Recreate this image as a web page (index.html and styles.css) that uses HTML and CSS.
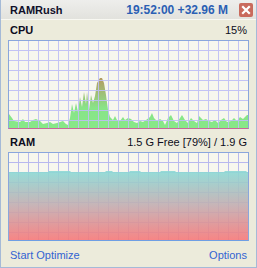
FILE: index.html
```html
<!DOCTYPE html>
<html>
<head>
<meta charset="utf-8">
<link rel="stylesheet" href="styles.css">
</head>
<body>
<div class="window">
  <div class="titlebar">
    <span class="app-name">RAMRush</span>
    <span class="stats">19:52:00 +32.96 M</span>
    <span class="close"><svg width="14" height="14" viewBox="0 0 14 14"><path d="M4 4 L10 10 M10 4 L4 10" stroke="#fff" stroke-width="2.2" stroke-linecap="square"/></svg></span>
  </div>
  <div class="content">
    <div class="row">
      <span class="label">CPU</span>
      <span class="value">15%</span>
    </div>
    <div class="graph cpu">
      <svg width="239" height="87" viewBox="9 41 239 87">
        <defs>
          <pattern id="grid1" x="0" y="0" width="10" height="10" patternUnits="userSpaceOnUse">
            <path d="M8.5 0 V10 M0 0.5 H10" stroke="#bdbdf5" stroke-width="1" fill="none"/>
          </pattern>
          <linearGradient id="cpuFill" x1="0" y1="78" x2="0" y2="128" gradientUnits="userSpaceOnUse">
            <stop offset="0" stop-color="#b39a62"/>
            <stop offset="0.35" stop-color="#9cc47a"/>
            <stop offset="0.6" stop-color="#88e488"/>
            <stop offset="1" stop-color="#88e888"/>
          </linearGradient>
        </defs>
        <rect x="9" y="41" width="239" height="87" fill="#f7f7ee"/>
        <polygon fill="url(#cpuFill)" points="9,128 9,114 12,118 14,121 20,122 23,119 25,122 30,122 33,120 36,119 40,121 43,124 47,123 50,122 53,124 57,123 60,122 63,121 66,124 68,125 70,118 72,104 74,113 76,103 78,112 80,97 82,107 84,92 86,104 87,92 89,110 91,95 93,103 95,96 97,83 100,78 102,78 104,83 106,95 108,110 110,117 113,120 115,116 117,120 120,121 123,117 125,120 128,118 131,119 134,122 137,123 140,121 143,122 146,120 150,117 152,113 154,118 157,121 160,119 163,121 165,125 168,118 171,115 174,121 177,123 180,118 182,115 185,120 188,123 191,118 194,121 197,123 199,116 203,120 206,119 209,121 212,122 215,120 218,123 221,120 224,118 227,122 231,121 234,118 237,121 240,117 243,119 245,117 247,115 248,115 248,128"/>
        <rect x="9" y="41" width="239" height="87" fill="url(#grid1)" opacity="0.9"/>
      </svg>
    </div>
    <div class="row ram-row">
      <span class="label">RAM</span>
      <span class="value">1.5 G Free [79%] / 1.9 G</span>
    </div>
    <div class="graph ram">
      <svg width="239" height="87" viewBox="9 153 239 87">
        <defs>
          <pattern id="grid2" x="0" y="0" width="10" height="10" patternUnits="userSpaceOnUse">
            <path d="M8.5 0 V10 M0 2.5 H10" stroke="#b8b8ee" stroke-width="1" fill="none"/>
          </pattern>
          <linearGradient id="ramFill" x1="0" y1="172" x2="0" y2="240" gradientUnits="userSpaceOnUse">
            <stop offset="0" stop-color="#8cd8d4"/>
            <stop offset="0.5" stop-color="#c4acb0"/>
            <stop offset="1" stop-color="#f6797a"/>
          </linearGradient>
        </defs>
        <rect x="9" y="153" width="239" height="87" fill="#f7f7ee"/>
        <rect x="9" y="153" width="239" height="87" fill="url(#grid2)"/>
        <polygon fill="url(#ramFill)" opacity="0.9" points="9,240 9,172 48,172 49,171 70,171 71,172 105,172 106,171 112,171 113,172 129,172 130,171 140,171 141,172 160,172 161,171 175,171 176,172 224,172 225,171 246,171 247,172 248,172 248,240"/>
      </svg>
    </div>
  </div>
  <div class="footer">
    <a class="link">Start Optimize</a>
    <a class="link">Options</a>
  </div>
</div>
</body>
</html>
```
FILE: styles.css
```css
html, body {
  margin: 0;
  padding: 0;
}
body {
  font-family: "Liberation Sans", Arial, sans-serif;
  font-size: 11px;
  background: #ecebdb;
}
.window {
  width: 257px;
  height: 268px;
  box-sizing: border-box;
  border: 1px solid #a5bad7;
  border-top: none;
  background: #ecebdb;
  display: flex;
  flex-direction: column;
}
.titlebar {
  height: 19px;
  border-bottom: 1px solid #f8f8f2;
  background: linear-gradient(#eeeeec, #e2e2dd);
  display: flex;
  align-items: center;
  padding: 0 3px 0 9px;
  box-sizing: content-box;
}
.app-name {
  font-weight: bold;
  color: #10102a;
  font-size: 11px;
  flex: 1;
}
.stats {
  font-weight: bold;
  color: #2b5fb4;
  font-size: 12px;
  margin-right: 11px;
}
.close {
  width: 14px;
  height: 14px;
  background: #c96a5c;
  border-radius: 2px;
  display: flex;
}
.content {
  padding: 0 7px;
  display: flex;
  flex-direction: column;
}
.row {
  height: 20px;
  display: flex;
  justify-content: space-between;
  align-items: flex-end;
  padding: 0 2px 3px 2px;
  box-sizing: border-box;
  line-height: 13px;
  color: #0d0d20;
}
.ram-row {
  height: 23px;
}
.label {
  font-weight: bold;
}
.graph {
  width: 241px;
  height: 89px;
  box-sizing: border-box;
  border: 1px solid #8aa6dc;
  display: flex;
}
.graph.cpu {
  border-bottom-color: #c8689a;
}
.graph.ram {
  border-bottom-color: #6f9fe4;
}
.footer {
  display: flex;
  justify-content: space-between;
  padding: 8px 9px 0 9px;
  line-height: 13px;
}
.link {
  color: #3264d2;
  cursor: pointer;
}
```
